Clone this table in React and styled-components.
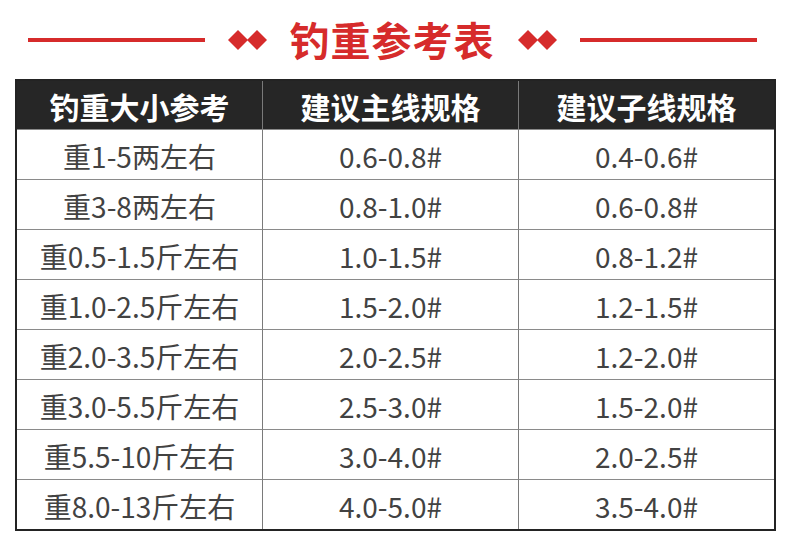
import React from "react";
import styled, { createGlobalStyle } from "styled-components";

const Global = createGlobalStyle`
  html, body { margin: 0; padding: 0; background: #fff; }
  body { font-family: "Noto Sans CJK SC", "Noto Sans", sans-serif; }
`;

const RED = "#d62b2b";

const Page = styled.div`
  width: 790px;
  height: 550px;
  background: #fff;
  overflow: hidden;
`;

const TitleBar = styled.div`
  height: 79px;
  display: flex;
  align-items: center;
  justify-content: center;
  gap: 23px;
  padding-right: 6px;
  box-sizing: border-box;
`;

const Rule = styled.div`
  width: 177px;
  height: 4px;
  background: ${RED};
`;

const Title = styled.h1`
  margin: 0;
  font-size: 40px;
  font-weight: 700;
  color: ${RED};
  letter-spacing: 1px;
  line-height: 1;
  padding-bottom: 2px;
`;

const Diamonds = () => (
  <svg width="39" height="20" viewBox="0 0 39 20">
    <polygon points="10,0 20,10 10,20 0,10" fill={RED} />
    <polygon points="29,0 39,10 29,20 19,10" fill={RED} />
  </svg>
);

const Table = styled.div`
  margin-left: 15px;
  width: 761px;
  border: 2px solid #232323;
  box-sizing: border-box;
  display: grid;
  grid-template-columns: 245px 256px 1fr;
`;

const Cell = styled.div`
  display: flex;
  align-items: center;
  justify-content: center;
  box-sizing: border-box;
  height: ${(p) => (p.$head ? "48px" : "50px")};
  background: ${(p) => (p.$head ? "#262626" : "#fff")};
  color: ${(p) => (p.$head ? "#fff" : "#424242")};
  font-size: ${(p) => (p.$head ? "30px" : "28px")};
  font-weight: ${(p) => (p.$head ? 700 : 400)};
  border-left: ${(p) => (p.$first ? "none" : "1px solid #7a7a7a")};
  border-top: ${(p) => (p.$head ? "none" : "1px solid #8a8a8a")};
  padding-top: 2px;
  white-space: nowrap;
`;

const head = ["钓重大小参考", "建议主线规格", "建议子线规格"];
const rows = [
  ["重1-5两左右", "0.6-0.8#", "0.4-0.6#"],
  ["重3-8两左右", "0.8-1.0#", "0.6-0.8#"],
  ["重0.5-1.5斤左右", "1.0-1.5#", "0.8-1.2#"],
  ["重1.0-2.5斤左右", "1.5-2.0#", "1.2-1.5#"],
  ["重2.0-3.5斤左右", "2.0-2.5#", "1.2-2.0#"],
  ["重3.0-5.5斤左右", "2.5-3.0#", "1.5-2.0#"],
  ["重5.5-10斤左右", "3.0-4.0#", "2.0-2.5#"],
  ["重8.0-13斤左右", "4.0-5.0#", "3.5-4.0#"],
];

export default function App() {
  return (
    <Page>
      <Global />
      <TitleBar>
        <Rule />
        <Diamonds />
        <Title>钓重参考表</Title>
        <Diamonds />
        <Rule />
      </TitleBar>
      <Table>
        {head.map((h, i) => (
          <Cell key={h} $head $first={i === 0}>
            {h}
          </Cell>
        ))}
        {rows.map((r, ri) =>
          r.map((c, i) => (
            <Cell key={ri + "-" + i} $first={i === 0}>
              {c}
            </Cell>
          ))
        )}
      </Table>
    </Page>
  );
}
